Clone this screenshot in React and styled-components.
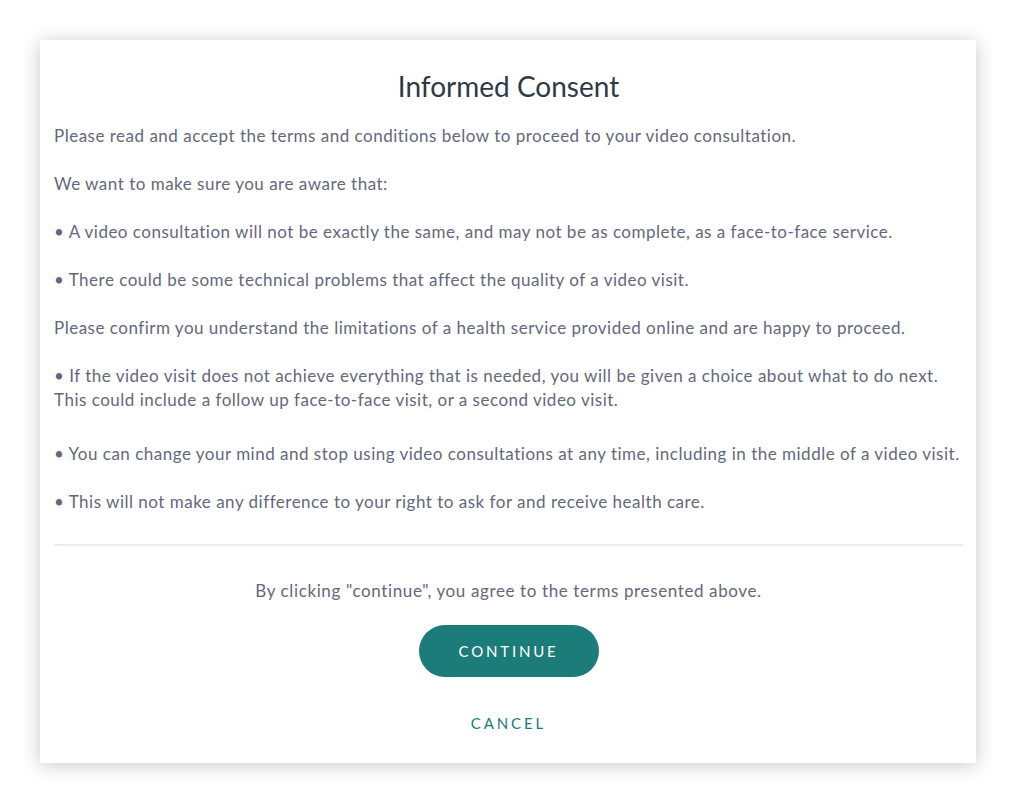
import React from 'react';
import styled, { createGlobalStyle } from 'styled-components';

const GlobalStyle = createGlobalStyle`
  html, body {
    margin: 0;
    padding: 0;
    background: #ffffff;
  }
  body {
    font-family: 'Lato', 'Noto Sans', sans-serif;
  }
`;

const Page = styled.div`
  padding: 40px;
  box-sizing: border-box;
  width: 1016px;
`;

const Card = styled.div`
  background: #fff;
  box-shadow: 0 2px 18px rgba(0, 0, 0, 0.22);
  padding: 28px 13px 32px 14px;
  box-sizing: border-box;
  width: 936px;
  height: 723px;
  display: flex;
  flex-direction: column;
`;

const Title = styled.h1`
  margin: 0 0 20px;
  text-align: center;
  font-size: 28px;
  font-weight: 400;
  line-height: 36px;
  color: #2e3a44;
`;

const Body = styled.div`
  color: #63687b;
  font-size: 17px;
  letter-spacing: 0.5px;
  line-height: 24px;
`;

const Para = styled.p`
  margin: 0 0 ${(p) => (p.$extra ? 30 : 24)}px;
`;

const Divider = styled.hr`
  border: none;
  border-top: 2px solid #e9edf3;
  margin: 6px 0 0;
`;

const Footer = styled.div`
  display: flex;
  flex-direction: column;
  align-items: center;
  padding-top: 33px;
`;

const Agree = styled.div`
  color: #63687b;
  font-size: 17px;
  letter-spacing: 0.62px;
  line-height: 24px;
`;

const Button = styled.button`
  margin-top: 22px;
  width: 180px;
  height: 52px;
  border: none;
  border-radius: 26px;
  background: #1b7c79;
  color: #fff;
  font-family: inherit;
  font-size: 15px;
  letter-spacing: 2.8px;
  cursor: pointer;
`;

const LinkButton = styled.button`
  margin-top: 36px;
  border: none;
  background: none;
  color: #1b7c79;
  font-family: inherit;
  font-size: 15px;
  letter-spacing: 2.9px;
  cursor: pointer;
`;

const paragraphs = [
  'Please read and accept the terms and conditions below to proceed to your video consultation.',
  'We want to make sure you are aware that:',
  '• A video consultation will not be exactly the same, and may not be as complete, as a face-to-face service.',
  '• There could be some technical problems that affect the quality of a video visit.',
  'Please confirm you understand the limitations of a health service provided online and are happy to proceed.',
  '• If the video visit does not achieve everything that is needed, you will be given a choice about what to do next. This could include a follow up face-to-face visit, or a second video visit.',
  '• You can change your mind and stop using video consultations at any time, including in the middle of a video visit.',
  '• This will not make any difference to your right to ask for and receive health care.',
];

const App = () => (
  <Page>
    <GlobalStyle />
    <Card>
      <Title>Informed Consent</Title>
      <Body>
        {paragraphs.map((p, i) => (
          <Para key={p} $extra={i === 5}>{p}</Para>
        ))}
      </Body>
      <Divider />
      <Footer>
        <Agree>By clicking "continue", you agree to the terms presented above.</Agree>
        <Button>CONTINUE</Button>
        <LinkButton>CANCEL</LinkButton>
      </Footer>
    </Card>
  </Page>
);

export default App;
